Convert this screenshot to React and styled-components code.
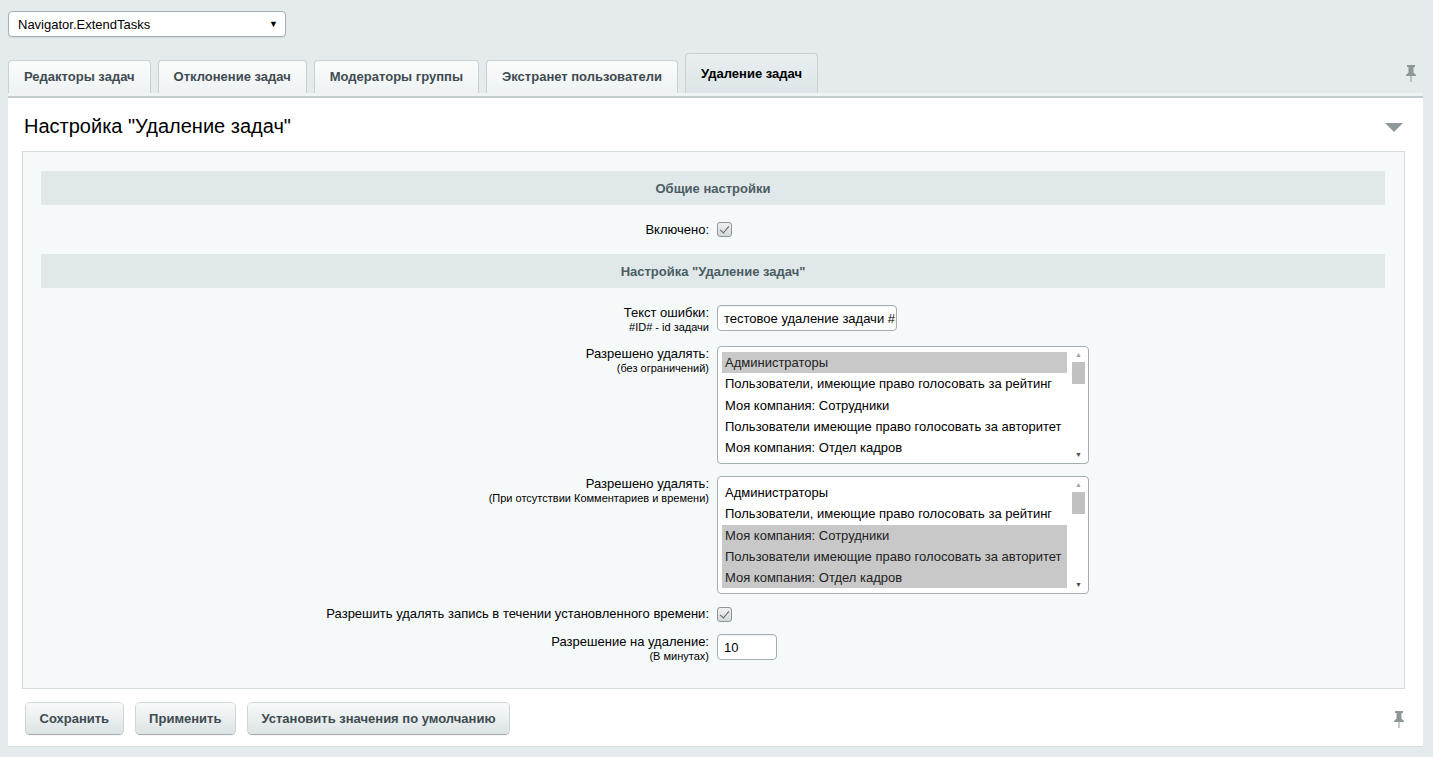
import styled, { createGlobalStyle } from "styled-components";

const GlobalStyle = createGlobalStyle`
  html, body {
    margin: 0;
    padding: 0;
    background: #e5ebed;
    font-family: "Liberation Sans", Arial, sans-serif;
    font-size: 13px;
    color: #000;
  }
`;

const rights = [
  "Администраторы",
  "Пользователи, имеющие право голосовать за рейтинг",
  "Моя компания: Сотрудники",
  "Пользователи имеющие право голосовать за авторитет",
  "Моя компания: Отдел кадров",
];

const PinIcon = () => (
  <svg width="12" height="17" viewBox="0 0 12 17">
    <path d="M2 0h8v2H8.5v5.5L11 10v1H1v-1l2.5-2.5V2H2z" fill="#8d9699" />
    <rect x="5.5" y="11" width="1" height="6" fill="#8d9699" />
  </svg>
);

const Listbox = ({ selected }) => (
  <ListWrap>
    <ListItems>
      {rights.map((r, i) => (
        <Option key={r} $selected={selected.includes(i)}>
          {r}
        </Option>
      ))}
    </ListItems>
    <Scroll>
      <Arrow>▲</Arrow>
      <Track>
        <Thumb />
      </Track>
      <Arrow>▼</Arrow>
    </Scroll>
  </ListWrap>
);

const App = () => {
  return (
    <>
      <GlobalStyle />
      <Page>
        <TopSelect>
          <span>Navigator.ExtendTasks</span>
          <Caret>▼</Caret>
        </TopSelect>
        <TabBar>
          <Tab>Редакторы задач</Tab>
          <Tab>Отклонение задач</Tab>
          <Tab>Модераторы группы</Tab>
          <Tab>Экстранет пользователи</Tab>
          <Tab $active>Удаление задач</Tab>
          <PinSlot>
            <PinIcon />
          </PinSlot>
        </TabBar>
        <Strip />
        <Panel>
          <PanelHead>
            <Title>Настройка "Удаление задач"</Title>
            <Collapse />
          </PanelHead>
          <Inner>
            <SectionHead>Общие настройки</SectionHead>
            <Row $h={49}>
              <Label>Включено:</Label>
              <Field>
                <Check />
              </Field>
            </Row>
            <SectionHead>Настройка "Удаление задач"</SectionHead>
            <FormBody>
              <Row $top>
                <Label>
                  Текст ошибки:
                  <Hint>#ID# - id задачи</Hint>
                </Label>
                <Field>
                  <TextInput $w={180}>тестовое удаление задачи #ID#</TextInput>
                </Field>
              </Row>
              <Row $top>
                <Label>
                  Разрешено удалять:
                  <Hint>(без ограничений)</Hint>
                </Label>
                <Field>
                  <Listbox selected={[0]} />
                </Field>
              </Row>
              <Row $top>
                <Label>
                  Разрешено удалять:
                  <Hint>(При отсутствии Комментариев и времени)</Hint>
                </Label>
                <Field>
                  <Listbox selected={[2, 3, 4]} />
                </Field>
              </Row>
              <Row>
                <Label>Разрешить удалять запись в течении установленного времени:</Label>
                <Field>
                  <Check />
                </Field>
              </Row>
              <Row $top>
                <Label>
                  Разрешение на удаление:
                  <Hint>(В минутах)</Hint>
                </Label>
                <Field>
                  <TextInput $w={60}>10</TextInput>
                </Field>
              </Row>
            </FormBody>
          </Inner>
          <Footer>
            <Button>Сохранить</Button>
            <Button>Применить</Button>
            <Button>Установить значения по умолчанию</Button>
            <FooterPin>
              <PinIcon />
            </FooterPin>
          </Footer>
        </Panel>
      </Page>
    </>
  );
};

const Page = styled.div`
  padding: 11px 10px 12px 8px;
  width: 1433px;
  box-sizing: border-box;
`;

const TopSelect = styled.div`
  width: 278px;
  height: 26px;
  box-sizing: border-box;
  background: #fff;
  border: 1px solid #a5aeb1;
  border-radius: 4px;
  box-shadow: 0 1px 1px rgba(0, 0, 0, 0.08);
  display: flex;
  align-items: center;
  justify-content: space-between;
  padding: 0 7px 0 9px;
  font-size: 13px;
`;

const Caret = styled.span`
  font-size: 9px;
  color: #000;
`;

const TabBar = styled.div`
  display: flex;
  align-items: flex-end;
  gap: 7px;
  margin-top: 16px;
  height: 40px;
`;

const Tab = styled.div`
  height: ${(p) => (p.$active ? 40 : 33)}px;
  box-sizing: border-box;
  padding: 0 15px ${(p) => (p.$active ? 0 : 1)}px;
  display: flex;
  align-items: center;
  font-weight: bold;
  font-size: 13px;
  color: ${(p) => (p.$active ? "#000" : "#3f4b51")};
  border: 1px solid #c7d0d3;
  border-bottom: none;
  border-radius: 4px 4px 0 0;
  background: ${(p) =>
    p.$active
      ? "linear-gradient(#e9eff0, #dde5e8)"
      : "linear-gradient(#fbfcfc, #eef2f3)"};
`;

const PinSlot = styled.div`
  margin-left: auto;
  margin-right: 6px;
  align-self: center;
  margin-top: 4px;
`;

const Strip = styled.div`
  height: 3px;
  background: #eef3f4;
  border-bottom: 2px solid #c2cbce;
`;

const Panel = styled.div`
  background: #fff;
  width: 1415px;
  box-sizing: border-box;
  border-bottom: 1px solid #d5dcde;
  padding: 0 18px 0 14px;
`;

const PanelHead = styled.div`
  height: 53px;
  display: flex;
  align-items: center;
  justify-content: space-between;
  padding: 0 2px;
`;

const Title = styled.div`
  font-size: 20px;
  color: #000;
  margin-top: 4px;
`;

const Collapse = styled.div`
  width: 0;
  height: 0;
  border-left: 9px solid transparent;
  border-right: 9px solid transparent;
  border-top: 9px solid #8e989b;
  margin-top: 5px;
`;

const Inner = styled.div`
  background: #f5f9f9;
  border: 1px solid #d5dcde;
  padding: 19px 19px 25px 18px;
`;

const SectionHead = styled.div`
  height: 34px;
  background: #e0e8ea;
  display: flex;
  align-items: center;
  justify-content: center;
  font-weight: bold;
  font-size: 13px;
  color: #4b5d63;
`;

const FormBody = styled.div`
  padding-top: 17px;
  display: flex;
  flex-direction: column;
  gap: 12px;
`;

const Row = styled.div`
  display: grid;
  grid-template-columns: 50% 50%;
  align-items: ${(p) => (p.$top ? "start" : "center")};
  min-height: ${(p) => p.$h || 0}px;
`;

const Label = styled.div`
  text-align: right;
  padding-right: 4px;
  font-size: 13px;
  line-height: 16px;
  color: #000;
`;

const Hint = styled.div`
  font-size: 11px;
  line-height: 13px;
  color: #000;
`;

const Field = styled.div`
  padding-left: 4px;
  display: flex;
`;

const Check = styled.div`
  width: 15px;
  height: 15px;
  box-sizing: border-box;
  border: 1px solid #8c9598;
  border-radius: 3px;
  background: linear-gradient(#eef1f2, #d3d9db);
  position: relative;
  &::after {
    content: "";
    position: absolute;
    left: 4px;
    top: 1px;
    width: 4px;
    height: 8px;
    border: solid #596266;
    border-width: 0 1.5px 1.5px 0;
    transform: rotate(40deg);
  }
`;

const TextInput = styled.div`
  width: ${(p) => p.$w}px;
  height: 26px;
  box-sizing: border-box;
  background: #fff;
  border: 1px solid #a5aeb1;
  border-radius: 4px;
  box-shadow: inset 0 1px 1px rgba(0, 0, 0, 0.06);
  padding: 0 6px;
  display: flex;
  align-items: center;
  font-size: 13px;
  white-space: nowrap;
  overflow: hidden;
`;

const ListWrap = styled.div`
  width: 372px;
  height: 118px;
  box-sizing: border-box;
  background: #fff;
  border: 1px solid #a5aeb1;
  border-radius: 4px;
  display: flex;
  padding: 5px 1px 1px 4px;
`;

const ListItems = styled.div`
  flex: 1;
`;

const Option = styled.div`
  height: 21.3px;
  line-height: 21.3px;
  padding-left: 3px;
  font-size: 13px;
  white-space: nowrap;
  background: ${(p) => (p.$selected ? "#c8c8c8" : "transparent")};
  color: ${(p) => (p.$selected ? "#222" : "#000")};
`;

const Scroll = styled.div`
  width: 17px;
  margin-left: 3px;
  margin-top: -4px;
  display: flex;
  flex-direction: column;
  align-items: center;
`;

const Arrow = styled.div`
  font-size: 7px;
  color: #a3a3a3;
  height: 14px;
  line-height: 14px;
  &:last-child {
    color: #505050;
  }
`;

const Track = styled.div`
  flex: 1;
  width: 100%;
  display: flex;
  justify-content: center;
`;

const Thumb = styled.div`
  width: 13px;
  height: 22px;
  background: #c1c1c1;
`;

const Footer = styled.div`
  height: 56px;
  display: flex;
  align-items: center;
  gap: 13px;
  padding-left: 4px;
  padding-top: 1px;
`;

const Button = styled.div`
  height: 31px;
  box-sizing: border-box;
  padding: 0 13.5px;
  display: flex;
  align-items: center;
  font-weight: bold;
  font-size: 13px;
  color: #3f4b51;
  border-radius: 4px;
  background: linear-gradient(#f8fafa, #dce3e5);
  box-shadow: 0 1px 1px rgba(0, 0, 0, 0.25), 0 0 0 1px #d4dbdd;
`;

const FooterPin = styled.div`
  margin-left: auto;
  margin-top: 6px;
`;

export default App;
